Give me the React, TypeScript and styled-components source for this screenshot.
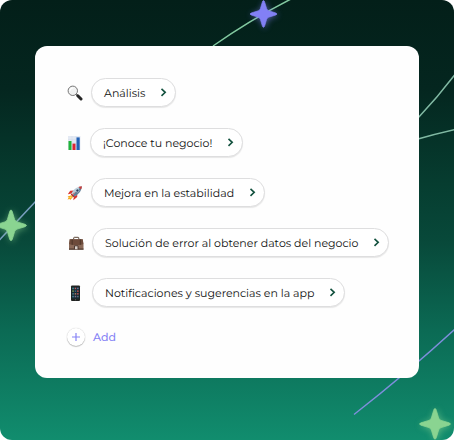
import React from "react";
import styled, { createGlobalStyle } from "styled-components";

const GlobalStyle = createGlobalStyle`
  *, *::before, *::after { box-sizing: border-box; }
  body {
    margin: 0;
    background: #fff;
    font-family: Montserrat, Inter, "Liberation Sans", sans-serif;
    text-rendering: geometricPrecision;
  }
`;

const Page = styled.main`
  position: relative;
  isolation: isolate;
  overflow: hidden;
  min-height: 100vh;
  padding: 46px 35px 62px;
  border-radius: 12px;
  background: linear-gradient(180deg, #031f19 0%, #04261f 20%, #063d30 42%, #08493a 55%, #0b6a54 75%, #118d6e 100%);
`;

const Sky = styled.svg`
  position: absolute;
  inset: 0;
  z-index: -1;
  width: 100%;
  height: 100%;
`;

const Card = styled.section`
  display: flex;
  flex-direction: column;
  align-items: flex-start;
  gap: 21px;
  padding: 32px;
  border-radius: 12px;
  background: #fefefe;
`;

const TopicList = styled.ul`
  display: flex;
  flex-direction: column;
  gap: 21px;
  margin: 0;
  padding: 0;
  list-style: none;
`;

const TopicRow = styled.li`
  display: flex;
  align-items: center;
  gap: 8px;
`;

const TopicIcon = styled.svg<{ $width: number }>`
  flex: none;
  width: ${(p) => p.$width}px;
  height: 16px;
`;

const Pill = styled.button`
  display: flex;
  align-items: center;
  gap: 15px;
  height: 29px;
  padding: 0 8px 0 12px;
  border: 1px solid #dededf;
  border-radius: 15px;
  background: #fff;
  box-shadow: 0 1px 1px #00000018;
  color: #101010;
  font-family: inherit;
  font-size: 11px;
  font-weight: 400;
  line-height: 16px;
  text-rendering: inherit;
  white-space: nowrap;
  cursor: pointer;
`;

const Chevron = styled.svg`
  flex: none;
  width: 7px;
  height: 10px;
`;

const AddButton = styled.button`
  display: flex;
  align-items: center;
  gap: 8px;
  padding: 0;
  border: 0;
  background: none;
  color: #8683f5;
  font-family: inherit;
  font-size: 11px;
  font-weight: 500;
  line-height: 18px;
  text-rendering: inherit;
  cursor: pointer;
`;

const AddCircle = styled.span`
  display: grid;
  place-items: center;
  width: 18px;
  height: 18px;
  border-radius: 50%;
  background: #fff;
  box-shadow: 0 0 1px #00000040, 0 1px 1px #00000038;
`;

const PlusIcon = styled.svg`
  width: 10px;
  height: 10px;
`;

const Magnifier = () => (
  <>
    <path d="M9.3 9.3l2 2" stroke="#777" strokeWidth="1.4" />
    <path d="M10.8 10.8l3.2 3.2" stroke="#262626" strokeWidth="3" strokeLinecap="round" />
    <circle cx="5.8" cy="5.8" r="4.7" fill="#f1f2f2" stroke="#777" strokeWidth="1" />
    <path d="M2.8 6.2a3.4 3.4 0 0 1 3.6-3.4" fill="none" stroke="#fff" strokeWidth="1.2" />
  </>
);

const BarChart = () => (
  <>
    <rect x="1" y="1" width="12.4" height="14" fill="#e3e9f3" />
    <path d="M1 4.5h12M1 8h12M1 11.5h12M5 1v14M9 1v14" stroke="#d0dae9" strokeWidth="0.4" />
    <rect x="1.5" y="6" width="3" height="9" fill="#20b43a" />
    <rect x="5.5" y="8.6" width="3" height="6.4" fill="#dc2532" />
    <rect x="9.5" y="2.4" width="3.2" height="12.6" fill="#2361b5" />
  </>
);

const Rocket = () => (
  <>
    <path d="M4.5 10.2L.6 11.4l1.1 1-1.2 2.2 2.1-.5.6 1 3-3.4z" fill="#f4a51c" />
    <path d="M4.1 11l-2.2 2.2 2.8-.5z" fill="#ffe25e" />
    <path d="M7 5.5L3.2 5.8.8 9.2l3.8-.6zM10.3 8.5l-.1 3.6-3.9 3.2.6-4z" fill="#d8342f" />
    <path d="M4 9.8C5.2 5.3 9.3 1.8 14.8 1.2c-.4 5.2-3.8 8.8-8.7 10.6z" fill="#b8cbd8" />
    <path d="M5.2 11C7 8.3 10.2 4.8 14.8 1.2c-.4 5.2-3.8 8.8-8.7 10.6z" fill="#607d94" />
    <path d="M11.5 2.1c1-.5 2.1-.8 3.3-.9-.1 1.2-.3 2.2-.7 3.2z" fill="#cf3b36" />
    <circle cx="10.4" cy="5.5" r="1.5" fill="#203e62" stroke="#e2ebf1" strokeWidth="0.6" />
    <path d="M3.8 9.4l2.6 2.7 1-.7-2.7-2.8z" fill="#ba2526" />
    <path d="M5.6 9.7l2-2" stroke="#ef5a47" strokeWidth="1" />
  </>
);

const Briefcase = () => (
  <>
    <path d="M6.7 4.2V3q0-.7.7-.7h3.7q.7 0 .7.7v1.2" fill="none" stroke="#5b4638" strokeWidth="1" />
    <path d="M2.7 4.2h13l.8 5.2v5H2v-5z" fill="#8a6a59" />
    <path d="M2.7 4.2h13l.7 4.7c-3 1.4-11.3 1.4-14.3 0z" fill="#6d4b3b" />
    <path d="M2 13.5h14.5v1.2H2z" fill="#513b31" />
    <path d="M5.2 4.3v5.6M13.3 4.3v5.6" stroke="#4b3428" strokeWidth="0.9" />
    <path d="M7.5 14.3v-3.5H11v3.5" fill="#d9cfc8" stroke="#443028" strokeWidth="0.9" />
  </>
);

const APP_COLORS = ["#4d9696", "#c65c5c", "#6875a1", "#7e9657", "#41647f", "#c9504f", "#527e8f", "#ac7b66", "#c94d51", "#4f879b", "#886e8e", "#5b7480"];

const Phone = () => (
  <>
    <rect x="4" y="0.5" width="9" height="15.4" rx="1" fill="#202322" />
    <rect x="4.8" y="2" width="7.4" height="11.7" fill="#172b35" />
    {APP_COLORS.map((color, i) => (
      <rect key={i} x={5.3 + (i % 3) * 2.4} y={2.7 + Math.floor(i / 3) * 2.7} width="1.5" height="1.5" fill={color} />
    ))}
    <circle cx="8.5" cy="14.8" r="0.5" fill="#777" />
  </>
);

type Topic = { label: string; width: number; Icon: React.ComponentType };

const TOPICS: Topic[] = [
  { label: "Análisis", width: 16, Icon: Magnifier },
  { label: "¡Conoce tu negocio!", width: 15, Icon: BarChart },
  { label: "Mejora en la estabilidad", width: 16, Icon: Rocket },
  { label: "Solución de error al obtener datos del negocio", width: 17, Icon: Briefcase },
  { label: "Notificaciones y sugerencias en la app", width: 17, Icon: Phone },
];

const STAR = "M0-15.5Q.9-15.5 1.4-13.5L3.6-6Q4.3-4.2 6-3.6L14-1.2Q17 0 14 1.2L6 3.6Q4.3 4.2 3.6 6L1.4 13.5Q0 17-1.4 13.5L-3.6 6Q-4.3 4.2-6 3.6L-14 1.2Q-17 0-14-1.2L-6-3.6Q-4.3-4.2-3.6-6L-1.4-13.5Q-.9-15.5 0-15.5Z";

const Star = ({ x, y, color, scale = 1 }: { x: number; y: number; color: string; scale?: number }) => (
  <g transform={`translate(${x} ${y}) scale(${scale})`} fill={color}>
    <path d={STAR} filter="url(#glow)" opacity="0.65" transform="translate(1 1)" />
    <path d={STAR} stroke={color} strokeWidth="0.8" strokeLinejoin="round" />
  </g>
);

const Constellation = () => (
  <Sky viewBox="0 0 454 440" preserveAspectRatio="xMidYMid slice" aria-hidden="true">
    <defs>
      <filter id="glow" x="-60%" y="-60%" width="220%" height="220%">
        <feGaussianBlur stdDeviation="3.5" />
      </filter>
    </defs>
    <g fill="none" strokeWidth="1.5">
      <path d="M213 46Q250 20 291-1" stroke="#82c9a0" />
      <path d="M418 118Q438 97 455 74.5" stroke="#80b9a3" />
      <path d="M418 139Q435 134 455 129.5" stroke="#80b9a3" />
      <path d="M-1 240.5L36 201" stroke="#7a9fc0" />
      <path d="M354 414.5Q408 372 455 329" stroke="#7d8edb" />
    </g>
    <Star x={263.5} y={14} color="#8280f5" scale={0.87} />
    <Star x={11} y={225.5} color="#8ad491" />
    <Star x={435} y={424} color="#8ad491" />
  </Sky>
);

export default function App() {
  return (
    <>
      <GlobalStyle />
      <Page>
        <Constellation />
        <Card>
          <TopicList>
            {TOPICS.map(({ label, width, Icon }) => (
              <TopicRow key={label}>
                <TopicIcon $width={width} viewBox={`0 0 ${width} 16`} aria-hidden="true">
                  <Icon />
                </TopicIcon>
                <Pill type="button">
                  {label}
                  <Chevron viewBox="0 0 7 10" fill="none" stroke="#14523f" strokeWidth="1.6" aria-hidden="true">
                    <path d="M1.5 .8L5.2 4.3L1.5 7.8" />
                  </Chevron>
                </Pill>
              </TopicRow>
            ))}
          </TopicList>
          <AddButton type="button">
            <AddCircle>
              <PlusIcon viewBox="0 0 10 10" stroke="#8683f5" strokeWidth="1.2" aria-hidden="true">
                <path d="M5 1v8M1 5h8" />
              </PlusIcon>
            </AddCircle>
            Add
          </AddButton>
        </Card>
      </Page>
    </>
  );
}
